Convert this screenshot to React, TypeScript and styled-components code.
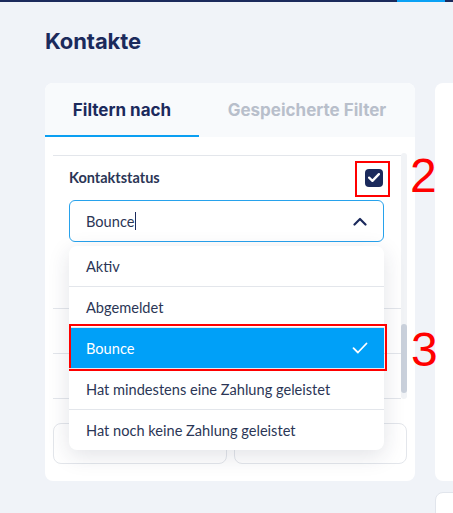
import React from "react";
import styled, { createGlobalStyle } from "styled-components";

const Global = createGlobalStyle`
  html, body { margin: 0; padding: 0; }
  body {
    background: #f0f3f8;
    font-family: Inter, "Noto Sans", sans-serif;
    overflow: hidden;
    width: 453px;
    height: 513px;
  }
`;

const navy = "#1b2a5c";
const ink = "#2b3656";
const line = "#e3e6eb";

const TopBar = styled.div`
  height: 2px;
  background: ${navy};
  display: flex;
`;

const TopAccent = styled.div`
  margin-left: 397px;
  width: 48px;
  background: #0aa1f5;
`;

const Page = styled.div`
  padding-left: 45px;
  width: 453px;
  box-sizing: border-box;
  overflow: hidden;
  height: 511px;
`;

const Title = styled.h1`
  margin: 25px 0 0;
  font-family: Inter, sans-serif;
  font-size: 22px;
  line-height: 28px;
  font-weight: 700;
  color: ${navy};
  letter-spacing: -0.1px;
`;

const Columns = styled.div`
  display: flex;
  gap: 20px;
  margin-top: 28px;
`;

const FilterCard = styled.section`
  flex: 0 0 370px;
  width: 370px;
  height: 398px;
  background: #fff;
  border-radius: 8px;
  display: flex;
  flex-direction: column;
`;

const Tabs = styled.div`
  display: flex;
  height: 54px;
  background: #f8fafc;
  border-radius: 8px 8px 0 0;
`;

const Tab = styled.div<{ $active?: boolean }>`
  flex: ${(p) => (p.$active ? "0 0 154px" : "1")};
  display: flex;
  align-items: center;
  justify-content: center;
  white-space: nowrap;
  font-family: Inter, sans-serif;
  font-size: 17px;
  font-weight: 700;
  color: ${(p) => (p.$active ? navy : "#b8bfcb")};
  border-bottom: 2px solid ${(p) => (p.$active ? "#0a9ff2" : "transparent")};
  padding-top: 1px;
  box-sizing: border-box;
`;

const CardBody = styled.div`
  flex: 1;
  padding: 16px 8px 17px;
  display: flex;
  flex-direction: column;
`;

const ScrollArea = styled.div`
  height: 246px;
  display: flex;
`;

const Sections = styled.div`
  flex: 1;
  padding-top: 2px;
`;

const Section = styled.div<{ $first?: boolean; $h?: number }>`
  border-top: ${(p) => (p.$first ? `1px solid ${line}` : "none")};
  border-bottom: 1px solid ${line};
  padding: ${(p) => (p.$first ? "12px 17px 66px 16px" : "0 17px 0 16px")};
  height: ${(p) => (p.$h ? `${p.$h}px` : "auto")};
`;

const ScrollTrack = styled.div`
  width: 6px;
  background: #f1f3f6;
  border-radius: 3px;
  display: flex;
  flex-direction: column;
  justify-content: flex-end;
  padding-bottom: 6px;
`;

const ScrollThumb = styled.div`
  height: 69px;
  background: #c9d0db;
  border-radius: 3px;
`;

const FieldHeader = styled.div`
  display: flex;
  align-items: center;
  justify-content: space-between;
  height: 19px;
`;

const Label = styled.span`
  font-family: Lato, sans-serif;
  font-size: 14.5px;
  font-weight: 700;
  color: ${ink};
`;

const CheckWrap = styled.div`
  position: relative;
  width: 18px;
  height: 18px;
  margin-right: 1px;
`;

const Checkbox = styled.div`
  width: 18px;
  height: 18px;
  border-radius: 4px;
  background: ${navy};
  display: flex;
  align-items: center;
  justify-content: center;
`;

const AnnotationBox = styled.div<{ $inset: string }>`
  position: absolute;
  inset: ${(p) => p.$inset};
  border: 2px solid #ff0000;
  pointer-events: none;
`;

const AnnotationNumber = styled.span<{ $left: number; $top: number }>`
  position: absolute;
  left: calc(100% + ${(p) => p.$left}px);
  top: ${(p) => p.$top}px;
  font-family: "Liberation Sans", Arial, sans-serif;
  font-size: 48px;
  line-height: 48px;
  color: #ff0000;
`;

const SelectWrap = styled.div`
  position: relative;
  margin-top: 13px;
`;

const SelectInput = styled.div`
  height: 42px;
  box-sizing: border-box;
  border: 1px solid #27a2ec;
  border-radius: 6px;
  display: flex;
  align-items: center;
  padding: 0 16px 0 16px;
  background: #fff;
`;

const InputText = styled.span`
  font-family: Lato, sans-serif;
  font-size: 14.6px;
  color: ${ink};
  flex: 1;
  display: flex;
  align-items: center;
`;

const Caret = styled.span`
  display: inline-block;
  width: 1px;
  height: 18px;
  background: ${navy};
  margin-left: 1px;
`;

const Menu = styled.ul`
  position: absolute;
  left: 0;
  right: 0;
  top: calc(100% + 4px);
  margin: 0;
  padding: 0;
  list-style: none;
  background: #fff;
  border-radius: 8px;
  box-shadow: 0 6px 22px rgba(30, 40, 70, 0.13);
  z-index: 5;
`;

const MenuItem = styled.li<{ $selected?: boolean }>`
  position: relative;
  height: 40px;
  display: flex;
  align-items: center;
  justify-content: space-between;
  padding: 0 16px 0 17px;
  white-space: nowrap;
  font-family: Lato, sans-serif;
  font-size: 14.6px;
  color: ${(p) => (p.$selected ? "#fff" : ink)};
  background: ${(p) => (p.$selected ? "#00a0f8" : "transparent")};
  & + & {
    border-top: 1px solid ${line};
  }
  &:first-child {
    border-radius: 8px 8px 0 0;
  }
  &:last-child {
    border-radius: 0 0 8px 8px;
  }
`;

const ButtonRow = styled.div`
  display: grid;
  grid-template-columns: 1fr 1fr;
  gap: 7px;
  margin-top: 24px;
`;

const GhostButton = styled.div`
  height: 41px;
  box-sizing: border-box;
  border: 1px solid ${line};
  border-radius: 8px;
  background: #fff;
`;

const SideColumn = styled.div`
  display: flex;
  flex-direction: column;
  gap: 11px;
  flex: 0 0 120px;
`;

const ResultsCard = styled.div`
  height: 398px;
  background: #fff;
  border-radius: 8px;
`;

const SmallCard = styled.div`
  height: 40px;
  background: #fff;
  border: 1px solid #e1e5ec;
  border-radius: 8px;
`;

const Chevron = () => (
  <svg width="14" height="9" viewBox="0 0 14 9" fill="none">
    <path d="M1.5 7.5L7 2l5.5 5.5" stroke={navy} strokeWidth="2.2" strokeLinecap="round" strokeLinejoin="round" />
  </svg>
);

const SmallCheck = ({ color, w = 12, sw = 2.2 }: { color: string; w?: number; sw?: number }) => (
  <svg width={w} height={w * 0.75} viewBox="0 0 16 12" fill="none">
    <path d="M1.5 6.2l4.4 4.3L14.5 1.5" stroke={color} strokeWidth={sw} strokeLinecap="round" strokeLinejoin="round" />
  </svg>
);

const options = [
  "Aktiv",
  "Abgemeldet",
  "Bounce",
  "Hat mindestens eine Zahlung geleistet",
  "Hat noch keine Zahlung geleistet",
];

export default function App() {
  return (
    <>
      <Global />
      <TopBar>
        <TopAccent />
      </TopBar>
      <Page>
        <Title>Kontakte</Title>
        <Columns>
          <FilterCard>
            <Tabs>
              <Tab $active>Filtern nach</Tab>
              <Tab>Gespeicherte Filter</Tab>
            </Tabs>
            <CardBody>
              <ScrollArea>
                <Sections>
                  <Section $first>
                    <FieldHeader>
                      <Label>Kontaktstatus</Label>
                      <CheckWrap>
                        <Checkbox>
                          <SmallCheck color="#fff" w={12} sw={3} />
                        </Checkbox>
                        <AnnotationBox $inset="-8px -7px -10px -10px">
                          <AnnotationNumber $left={22} $top={-11}>2</AnnotationNumber>
                        </AnnotationBox>
                      </CheckWrap>
                    </FieldHeader>
                    <SelectWrap>
                      <SelectInput>
                        <InputText>
                          Bounce
                          <Caret />
                        </InputText>
                        <Chevron />
                      </SelectInput>
                      <Menu>
                        {options.map((o) => (
                          <MenuItem key={o} $selected={o === "Bounce"}>
                            {o}
                            {o === "Bounce" && (
                              <>
                                <SmallCheck color="#fff" w={16} sw={1.8} />
                                <AnnotationBox $inset="-4px -3px -3px 0">
                                  <AnnotationNumber $left={26} $top={0}>3</AnnotationNumber>
                                </AnnotationBox>
                              </>
                            )}
                          </MenuItem>
                        ))}
                      </Menu>
                    </SelectWrap>
                  </Section>
                  <Section $h={44} />
                  <Section $h={44} />
                </Sections>
                <ScrollTrack>
                  <ScrollThumb />
                </ScrollTrack>
              </ScrollArea>
              <ButtonRow>
                <GhostButton />
                <GhostButton />
              </ButtonRow>
            </CardBody>
          </FilterCard>
          <SideColumn>
            <ResultsCard />
            <SmallCard />
          </SideColumn>
        </Columns>
      </Page>
    </>
  );
}
